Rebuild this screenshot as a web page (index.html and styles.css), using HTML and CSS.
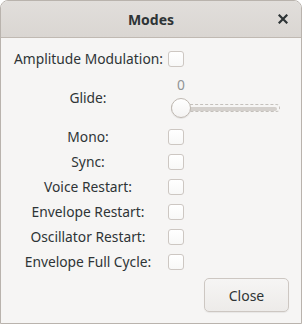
FILE: index.html
```html
<!DOCTYPE html>
<html lang="en">
<head>
    <meta charset="UTF-8">
    <title>Modes</title>
    <link rel="stylesheet" href="styles.css">
</head>
<body>
    <div class="dialog">
        <div class="titlebar">
            <span></span>
            <span class="title">Modes</span>
            <span class="close">
                <svg width="10" height="10" viewBox="0 0 10 10">
                    <path d="M1.5 1.5 L8.5 8.5 M8.5 1.5 L1.5 8.5" stroke="#2e3436" stroke-width="2.2" stroke-linecap="square"/>
                </svg>
            </span>
        </div>
        <div class="content">
            <div class="grid">
                <label class="lbl">Amplitude Modulation:</label>
                <span class="check"></span>

                <label class="lbl">Glide:</label>
                <div class="scale">
                    <div class="value">0</div>
                    <div class="slider">
                        <div class="trough"><div class="fill"></div></div>
                        <div class="knob"></div>
                    </div>
                </div>

                <label class="lbl">Mono:</label>
                <span class="check"></span>
                <label class="lbl">Sync:</label>
                <span class="check"></span>
                <label class="lbl">Voice Restart:</label>
                <span class="check"></span>
                <label class="lbl">Envelope Restart:</label>
                <span class="check"></span>
                <label class="lbl">Oscillator Restart:</label>
                <span class="check"></span>
                <label class="lbl">Envelope Full Cycle:</label>
                <span class="check"></span>
            </div>
            <div class="actions">
                <button class="btn">Close</button>
            </div>
        </div>
    </div>
</body>
</html>
```

FILE: styles.css
```css
body {
    margin: 0;
    background: #ffffff;
    font-family: 'Noto Sans', 'DejaVu Sans', sans-serif;
    font-size: 13.8px;
    color: #2e3436;
}
.dialog {
    width: 302px;
    height: 324px;
    box-sizing: border-box;
    border: 1px solid #b9b3ad;
    border-radius: 8px 8px 0 0;
    background: #f6f5f4;
    display: flex;
    flex-direction: column;
    overflow: hidden;
}
.titlebar {
    height: 36px;
    border-bottom: 1px solid #c0b9b2;
    background: linear-gradient(#e1dedb, #dad6d2);
    display: grid;
    grid-template-columns: 1fr auto 1fr;
    align-items: center;
}
.title {
    font-weight: bold;
    font-size: 14px;
}
.close {
    justify-self: end;
    margin-right: 13px;
    display: flex;
}
.content {
    flex: 1;
    display: flex;
    flex-direction: column;
    padding: 13px 0 0 13px;
}
.grid {
    display: grid;
    grid-template-columns: 148px 1fr;
    column-gap: 6px;
    row-gap: 9px;
    align-items: center;
}
.lbl {
    text-align: center;
    line-height: 16px;
    white-space: nowrap;
}
.check {
    width: 14px;
    height: 14px;
    border: 1px solid #cdc7c2;
    border-radius: 3px;
    background: linear-gradient(#ffffff, #f8f8f7);
}
.scale {
    display: flex;
    flex-direction: column;
    width: 112px;
}
.value {
    width: 24px;
    text-align: center;
    color: #919494;
    line-height: 17px;
    margin-left: 1px;
}
.slider {
    position: relative;
    height: 24px;
    margin-top: 3px;
}
.trough {
    position: absolute;
    left: 3px;
    right: 0;
    top: 8px;
    height: 8px;
    box-sizing: border-box;
    border: 1px dashed #c4c0bb;
    border-radius: 4px;
    padding: 2px 2px;
}
.fill {
    height: 4px;
    background: #d4d0cc;
    border-radius: 2px;
}
.knob {
    position: absolute;
    left: 3px;
    top: 2px;
    width: 18px;
    height: 18px;
    border: 1px solid #bfb8b1;
    border-radius: 50%;
    background: linear-gradient(#ffffff, #f4f3f2);
    box-shadow: 0 1px 1px rgba(0, 0, 0, 0.08);
}
.actions {
    display: flex;
    justify-content: flex-end;
    padding: 8px 12px 0 0;
}
.btn {
    width: 85px;
    height: 34px;
    border: 1px solid #cdc7c2;
    border-radius: 5px;
    background: linear-gradient(#f6f5f4, #edebe9);
    box-shadow: 0 1px 1px rgba(0, 0, 0, 0.06);
    font-family: inherit;
    font-size: 14px;
    color: #2e3436;
}
```
